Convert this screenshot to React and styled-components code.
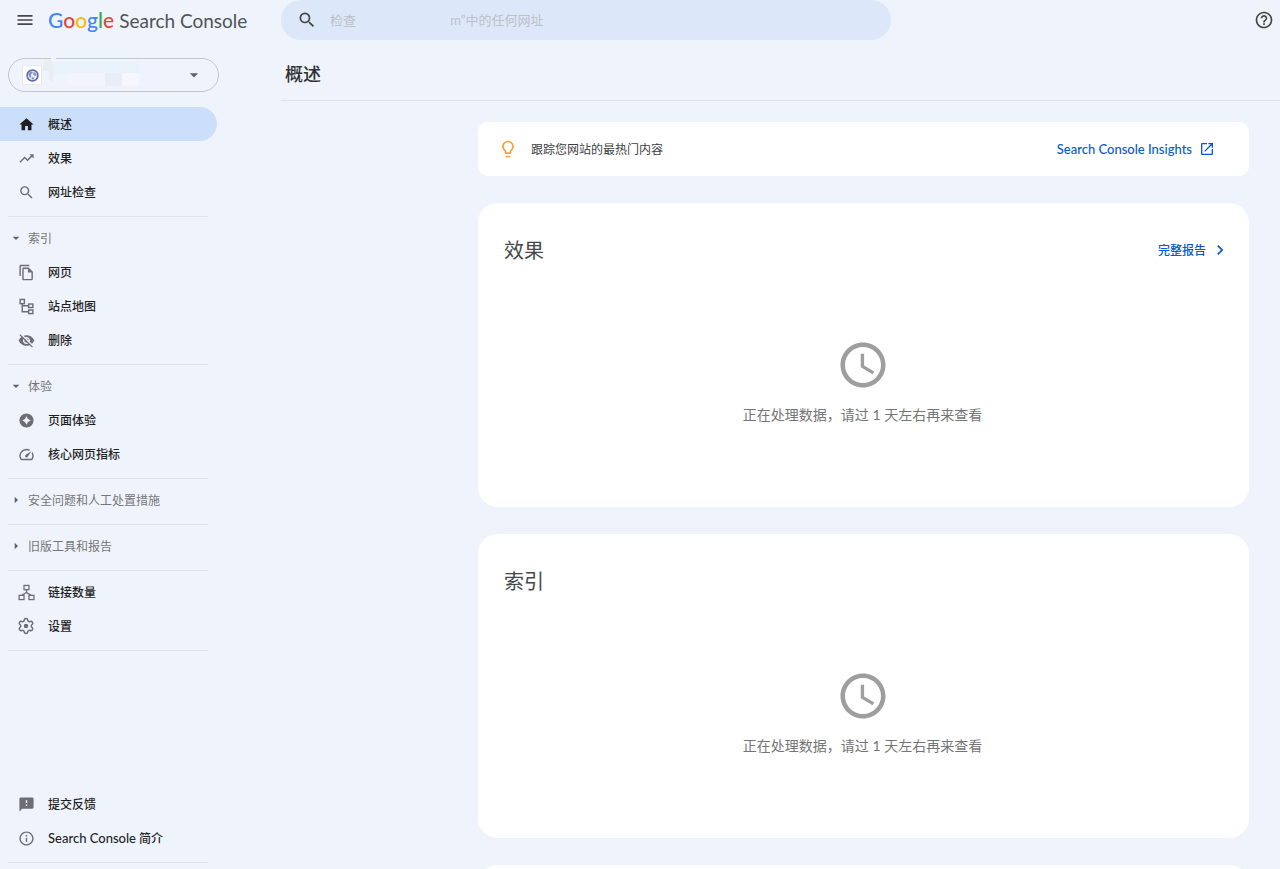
import React from "react";
import styled, { createGlobalStyle } from "styled-components";
import {
  MdMenu,
  MdSearch,
  MdHome,
  MdTrendingUp,
  MdArrowDropDown,
  MdArrowRight,
  MdOutlineFileCopy,
  MdVisibilityOff,
  MdOutlineSpeed,
  MdFeedback,
  MdInfoOutline,
  MdHelpOutline,
  MdOpenInNew,
  MdChevronRight,
  MdLightbulbOutline,
  MdAccessTime,
} from "react-icons/md";
import { Settings } from "lucide-react";

const GlobalStyle = createGlobalStyle`
  *, *::before, *::after { box-sizing: border-box; }
  body {
    margin: 0;
    background: #eff4fc;
    color: #1f1f1f;
    font-family: Lato, "Noto Sans CJK SC", sans-serif;
    font-size: 12px;
    line-height: 17px;
  }
  button, input, select { font: inherit; color: inherit; }
  svg { display: block; flex: none; }
`;

const Page = styled.div`
  display: flex;
  flex-direction: column;
  height: 100vh;
  overflow: hidden;
`;

const TopBar = styled.header`
  display: flex;
  align-items: flex-start;
  height: 41px;
  flex: none;
  padding-right: 6px;
`;

const Brand = styled.div`
  display: flex;
  align-items: center;
  gap: 13px;
  width: 281px;
  height: 40px;
  padding-left: 15px;
`;

const IconButton = styled.button`
  display: flex;
  align-items: center;
  height: 40px;
  padding: 0;
  border: 0;
  background: none;
  color: #444746;
  cursor: pointer;
`;

const Logo = styled.a`
  display: flex;
  align-items: baseline;
  gap: 5px;
  color: #505357;
  font-size: 19px;
  line-height: 24px;
  text-decoration: none;
  white-space: nowrap;
`;

const Wordmark = styled.span`
  font-size: 21px;
`;

const Letter = styled.span`
  color: ${(p) => p.$color};
  font-weight: 500;
`;

const SearchBox = styled.label`
  display: flex;
  align-items: center;
  gap: 13px;
  flex: 0 1 610px;
  height: 40px;
  padding: 0 16px;
  border-radius: 20px;
  background: #dce7f9;
  color: #444746;
`;

const SearchInput = styled.input`
  flex: 1;
  min-width: 0;
  height: 24px;
  padding: 0;
  border: 0;
  outline: 0;
  background: transparent;
  font-size: 13px;
  &::placeholder { color: #bdc1c6; opacity: 1; }
`;

const Spacer = styled.div`
  flex: 1;
`;

const Body = styled.div`
  display: flex;
  flex: 1;
  min-height: 0;
`;

const Sidebar = styled.nav`
  display: flex;
  flex-direction: column;
  flex: none;
  width: 219px;
  padding: 17px 0 2px;
`;

const PropertyPicker = styled.div`
  position: relative;
  display: flex;
  align-items: center;
  height: 34px;
  margin: 0 0 15px 8px;
  padding: 0 14px 0 13px;
  border: 1px solid #c4c7c5;
  border-radius: 17px;
  color: #5f6368;
`;

const Favicon = styled.span`
  display: flex;
  align-items: center;
  justify-content: center;
  width: 20px;
  height: 20px;
  border: 1px solid #e6e8ec;
  border-radius: 2px;
  background: #fff;
`;

const PropertySelect = styled.select`
  flex: 1;
  min-width: 0;
  height: 24px;
  border: 0;
  outline: 0;
  appearance: none;
  background: transparent;
`;

const Smudge = styled.svg`
  position: absolute;
  left: 30px;
  top: -2px;
`;

const NavItem = styled.a`
  display: flex;
  align-items: center;
  gap: 13px;
  height: 34px;
  margin-right: 2px;
  padding-left: 17px;
  border-radius: 0 17px 17px 0;
  background: ${(p) => (p.$active ? "#cbdffb" : "transparent")};
  color: #1f1f1f;
  font-weight: 500;
  text-decoration: none;
  svg { color: ${(p) => (p.$active ? "#1f1f1f" : "#6b6e72")}; }
`;

const NavIcon = styled.span`
  display: flex;
  justify-content: center;
  width: 18px;
  circle.hub, .lucide-settings circle { fill: currentColor; stroke: none; }
`;

const Latin = styled.span`
  font-size: 13px;
`;

const NavGroup = styled.button`
  display: flex;
  align-items: center;
  gap: 4px;
  height: 34px;
  padding: 0 0 0 8px;
  border: 0;
  background: none;
  color: #747775;
  text-align: left;
  cursor: pointer;
  svg { color: #5f6368; }
`;

const Divider = styled.hr`
  flex: none;
  width: 200px;
  height: 1px;
  margin: 7px 0 4px 8px;
  border: 0;
  background: #dfe2e6;
`;

const Content = styled.main`
  flex: 1;
  min-width: 0;
  margin-left: 62px;
  overflow: hidden;
`;

const PageTitle = styled.h1`
  margin: 0;
  padding: 21px 4px 13px;
  border-bottom: 1px solid #dfe3e8;
  color: #303134;
  font-size: 18px;
  font-weight: 500;
  line-height: 25px;
`;

const Cards = styled.div`
  display: flex;
  flex-direction: column;
  gap: 27px;
  padding: 21px 31px 20px 197px;
`;

const Banner = styled.section`
  display: flex;
  align-items: center;
  gap: 13px;
  height: 54px;
  padding: 0 34px 0 20px;
  border-radius: 10px;
  background: #fff;
  color: #3c4043;
  svg { color: ${(p) => p.$accent}; }
`;

const BannerText = styled.p`
  flex: 1;
  margin: 0;
`;

const CardLink = styled.a`
  display: flex;
  align-items: center;
  gap: ${(p) => p.$gap}px;
  color: #0b57d0;
  font-weight: 500;
  text-decoration: none;
  svg { color: #0b57d0; }
`;

const Card = styled.section`
  min-height: 304px;
  padding: 32px 19px 24px 26px;
  border-radius: 20px;
  background: #fff;
`;

const CardHead = styled.div`
  display: flex;
  align-items: center;
  justify-content: space-between;
  height: 30px;
`;

const CardTitle = styled.h2`
  margin: 0;
  color: #444746;
  font-size: 20px;
  font-weight: 400;
  line-height: 30px;
`;

const Pending = styled.div`
  display: flex;
  flex-direction: column;
  align-items: center;
  gap: 12px;
  padding: 73px 9px 0 0;
  color: #9e9e9e;
`;

const PendingText = styled.p`
  margin: 0;
  color: #757575;
  font-size: 14px;
  line-height: 22px;
`;

const SitemapIcon = () => (
  <svg width="17" height="17" viewBox="0 0 24 24" fill="none" stroke="currentColor" strokeWidth="2" aria-hidden="true">
    <rect x="3" y="2" width="6" height="6" />
    <rect x="15" y="8.500" width="6" height="5" />
    <rect x="15" y="17" width="6" height="5" />
    <path d="M6 8v11.500h9M6 11h9" />
  </svg>
);

const LinksIcon = () => (
  <svg width="17" height="17" viewBox="0 0 24 24" fill="none" stroke="currentColor" strokeWidth="1.800" aria-hidden="true">
    <rect x="8.500" y="2" width="7" height="6" />
    <rect x="1.500" y="16" width="7" height="6" />
    <rect x="15.500" y="16" width="7" height="6" />
    <path d="M12 8v4.500M5.500 16l6.500-4 6.500 4" />
  </svg>
);

const ExperienceIcon = () => (
  <svg width="17" height="17" viewBox="0 0 24 24" fill="currentColor" aria-hidden="true">
    <path
      fillRule="evenodd"
      d="M12 2a10 10 0 1 0 0 20 10 10 0 0 0 0-20zm0 4l2.100 3.900L18 12l-3.900 2.100L12 18l-2.100-3.900L6 12l3.900-2.100z"
    />
  </svg>
);

const GearIcon = () => <Settings size={18} strokeWidth={2} />;

const GlobeIcon = () => (
  <svg width="13" height="13" viewBox="0 0 24 24" aria-hidden="true">
    <circle cx="12" cy="12" r="10" fill="#eef0f9" stroke="#5c6bb0" strokeWidth="3" />
    <path d="M4 9l5-5 4 2-4 4 1 5-3 1zM14 5l5 4v4l-4-1-2-3zM11 15l5 1-3 4-3-2z" fill="#8590c6" />
  </svg>
);

const letters = [
  ["G", "#4285f4"],
  ["o", "#ea4335"],
  ["o", "#fbbc04"],
  ["g", "#4285f4"],
  ["l", "#34a853"],
  ["e", "#ea4335"],
];

const Item = ({ icon: Icon, children, active }) => (
  <NavItem href="#" $active={active} aria-current={active ? "page" : undefined}>
    <NavIcon>
      <Icon size={17} />
    </NavIcon>
    <span>{children}</span>
  </NavItem>
);

const Group = ({ open, children }) => (
  <NavGroup type="button" aria-expanded={!!open}>
    {open ? <MdArrowDropDown size={16} /> : <MdArrowRight size={16} />}
    {children}
  </NavGroup>
);

const PendingNotice = () => (
  <Pending>
    <MdAccessTime size={54} />
    <PendingText>正在处理数据，请过 1 天左右再来查看</PendingText>
  </Pending>
);

export default function App() {
  return (
    <Page>
      <GlobalStyle />
      <TopBar>
        <Brand>
          <IconButton type="button" aria-label="主菜单">
            <MdMenu size={20} />
          </IconButton>
          <Logo href="#">
            <Wordmark>
              {letters.map(([char, color], i) => (
                <Letter key={i} $color={color}>{char}</Letter>
              ))}
            </Wordmark>
            <span>Search Console</span>
          </Logo>
        </Brand>
        <SearchBox>
          <MdSearch size={20} />
          <SearchInput
            type="text"
            aria-label="检查网址"
            placeholder={"检查" + "\u3000".repeat(7) + "\u2005m”中的任何网址"}
          />
        </SearchBox>
        <Spacer />
        <IconButton type="button" aria-label="帮助">
          <MdHelpOutline size={20} />
        </IconButton>
      </TopBar>

      <Body>
        <Sidebar>
          <PropertyPicker>
            <Favicon>
              <GlobeIcon />
            </Favicon>
            <PropertySelect aria-label="选择资源">
              <option value="site" aria-label="site" />
            </PropertySelect>
            <MdArrowDropDown size={20} />
            <Smudge width="124" height="32" viewBox="0 0 124 32" aria-hidden="true">
              <path d="M6 2h8v24l-4-4V14H4V8z" fill="#e9eef3" />
              <rect x="12" y="1" width="5" height="3" fill="#eff4fc" />
              <rect x="14" y="4" width="86" height="14" fill="#eaf2fc" />
              <rect x="29" y="16" width="37" height="13" fill="#f3f5fc" />
              <rect x="66" y="16" width="17" height="13" fill="#e9edf5" />
              <rect x="83" y="16" width="17" height="13" fill="#f5f7fd" />
              <rect x="100" y="8" width="20" height="20" fill="#eef3fd" />
            </Smudge>
          </PropertyPicker>

          <Item icon={MdHome} active>概述</Item>
          <Item icon={MdTrendingUp}>效果</Item>
          <Item icon={MdSearch}>网址检查</Item>
          <Divider />
          <Group open>索引</Group>
          <Item icon={MdOutlineFileCopy}>网页</Item>
          <Item icon={SitemapIcon}>站点地图</Item>
          <Item icon={MdVisibilityOff}>删除</Item>
          <Divider />
          <Group open>体验</Group>
          <Item icon={ExperienceIcon}>页面体验</Item>
          <Item icon={MdOutlineSpeed}>核心网页指标</Item>
          <Divider />
          <Group>安全问题和人工处置措施</Group>
          <Divider />
          <Group>旧版工具和报告</Group>
          <Divider />
          <Item icon={LinksIcon}>链接数量</Item>
          <Item icon={GearIcon}>设置</Item>
          <Divider />
          <Spacer />
          <Item icon={MdFeedback}>提交反馈</Item>
          <Item icon={MdInfoOutline}>
            <Latin>Search Console</Latin> 简介
          </Item>
          <Divider />
        </Sidebar>

        <Content>
          <PageTitle>概述</PageTitle>
          <Cards>
            <Banner $accent="#f9a13a">
              <MdLightbulbOutline size={20} />
              <BannerText>跟踪您网站的最热门内容</BannerText>
              <CardLink href="#" $gap={7}>
                <Latin>Search Console Insights</Latin>
                <MdOpenInNew size={16} />
              </CardLink>
            </Banner>
            <Card>
              <CardHead>
                <CardTitle>效果</CardTitle>
                <CardLink href="#" $gap={4}>
                  完整报告
                  <MdChevronRight size={20} />
                </CardLink>
              </CardHead>
              <PendingNotice />
            </Card>
            <Card>
              <CardHead>
                <CardTitle>索引</CardTitle>
              </CardHead>
              <PendingNotice />
            </Card>
            <Card />
          </Cards>
        </Content>
      </Body>
    </Page>
  );
}
